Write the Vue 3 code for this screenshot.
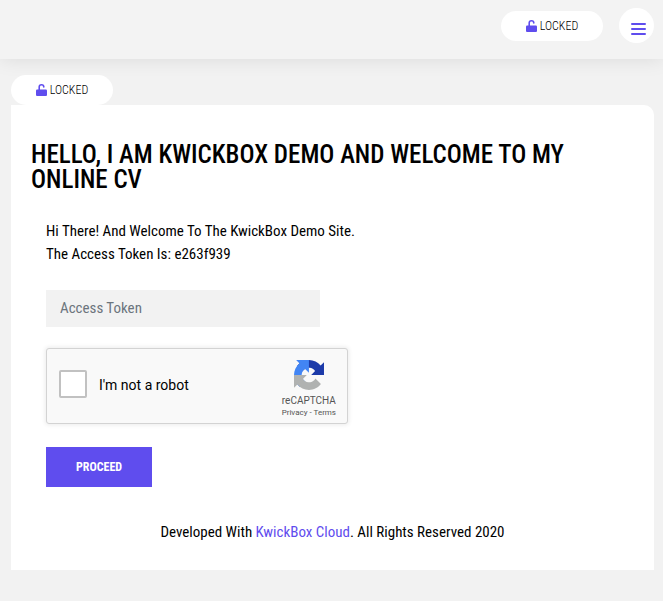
<template>
  <div class="page">
    <header class="header">
      <button type="button" class="lock-btn">
        <svg class="lock-icon" viewBox="0 0 11 12" aria-hidden="true">
          <path d="M3.2 6V3a2.3 2.2 0 0 1 4.6 0" fill="none" stroke="currentColor" stroke-width="1.6" stroke-linecap="round" />
          <rect x="0" y="5.6" width="11" height="6.4" rx="1.1" fill="currentColor" />
        </svg>
        LOCKED
      </button>
      <button type="button" class="menu-btn" aria-label="Menu" @click="menuOpen = !menuOpen">
        <svg class="menu-icon" viewBox="0 0 15 12" aria-hidden="true">
          <path d="M1 1h13M1 6h13M1 11h13" fill="none" stroke="currentColor" stroke-width="2" stroke-linecap="round" />
        </svg>
      </button>
    </header>

    <main class="main">
      <button type="button" class="lock-btn">
        <svg class="lock-icon" viewBox="0 0 11 12" aria-hidden="true">
          <path d="M3.2 6V3a2.3 2.2 0 0 1 4.6 0" fill="none" stroke="currentColor" stroke-width="1.6" stroke-linecap="round" />
          <rect x="0" y="5.6" width="11" height="6.4" rx="1.1" fill="currentColor" />
        </svg>
        LOCKED
      </button>

      <section class="card">
        <h1 class="title">HELLO, I AM KWICKBOX DEMO AND WELCOME TO MY ONLINE CV</h1>

        <form class="form" @submit.prevent>
          <p class="intro">
            Hi There! And Welcome To The KwickBox Demo Site.<br />
            The Access Token Is: e263f939
          </p>

          <input v-model="token" class="token" type="text" placeholder="Access Token" aria-label="Access Token" />

          <div class="captcha">
            <input id="robot" v-model="human" class="check" type="checkbox" />
            <label for="robot" class="check-label">I'm not a robot</label>
            <div class="brand">
              <svg class="brand-logo" viewBox="0 0 64 64" aria-hidden="true">
                <path d="M64 31.955l-.033-1.37V4.687l-7.16 7.16C50.948 4.674 42.033.093 32.05.093c-10.389 0-19.622 4.96-25.458 12.64l11.736 11.86a15.55 15.55 0 0 1 4.754-5.334c2.05-1.6 4.952-2.906 8.968-2.906.485 0 .86.057 1.135.163 4.976.393 9.288 3.14 11.828 7.124l-8.307 8.307L64 31.953" fill="#1c3aa9" />
                <path d="M31.862.094l-1.37.033H4.594l7.16 7.16C4.58 13.147 0 22.06 0 32.046c0 10.389 4.96 19.622 12.64 25.458L24.5 45.768a15.55 15.55 0 0 1-5.334-4.754c-1.6-2.05-2.906-4.952-2.906-8.968 0-.485.057-.86.163-1.135.393-4.976 3.14-9.288 7.124-11.828l8.307 8.307L31.86.095" fill="#4285f4" />
                <path d="M.001 32.045l.033 1.37v25.898l7.16-7.16c5.86 7.173 14.774 11.754 24.76 11.754 10.389 0 19.622-4.96 25.458-12.64l-11.736-11.86a15.55 15.55 0 0 1-4.754 5.334c-2.05 1.6-4.952 2.906-8.968 2.906-.485 0-.86-.057-1.135-.163-4.976-.393-9.288-3.14-11.828-7.124l8.307-8.307c-10.522.04-22.4.066-27.295-.005" fill="#b0b2b1" />
              </svg>
              <span class="brand-name">reCAPTCHA</span>
              <span class="brand-links"><a href="#">Privacy</a> - <a href="#">Terms</a></span>
            </div>
          </div>

          <button type="submit" class="proceed">PROCEED</button>
        </form>

        <footer class="footer">
          Developed With <a href="#">KwickBox Cloud</a>. All Rights Reserved 2020
        </footer>
      </section>
    </main>
  </div>
</template>

<script setup>
import { ref } from 'vue';

const token = ref('');
const human = ref(false);
const menuOpen = ref(false);
</script>

<style>
body {
  margin: 0;
  background: #f2f2f2;
}
</style>

<style scoped>
.page {
  min-height: 100vh;
  background: #f2f2f2;
  color: #000;
  font-family: 'Roboto Condensed', Roboto, sans-serif;
  font-size: 15px;
  line-height: 23px;
}

.page * {
  box-sizing: border-box;
}

button,
input {
  font-family: inherit;
}

.header {
  display: flex;
  justify-content: flex-end;
  align-items: center;
  gap: 16px;
  padding: 8px 9px 16px;
  background: #f3f3f3;
  box-shadow: 0 0 20px rgba(0, 0, 0, 0.1);
}

.lock-btn {
  display: inline-flex;
  align-items: center;
  justify-content: center;
  gap: 3px;
  width: 102px;
  height: 30px;
  padding: 0;
  border: none;
  border-radius: 15px;
  background: #fff;
  color: #000;
  font-size: 12px;
  font-weight: 300;
  cursor: pointer;
}

.lock-icon {
  width: 11px;
  height: 12px;
  color: #5f4dee;
}

.menu-btn {
  display: flex;
  justify-content: center;
  width: 35px;
  height: 35px;
  padding: 15px 0 0 4px;
  border: none;
  border-radius: 50%;
  background: #fff;
  color: #5f4dee;
  cursor: pointer;
}

.menu-icon {
  width: 15px;
  height: 12px;
}

.main {
  display: flex;
  flex-direction: column;
  align-items: flex-start;
  padding: 16px 9px 31px 11px;
}

.card {
  width: 100%;
  padding: 37px 20px 26px;
  border-radius: 0 10px 0 0;
  background: #fff;
}

.title {
  margin: 0;
  font-size: 25px;
  font-weight: 500;
  line-height: 25px;
}

.form {
  display: flex;
  flex-direction: column;
  align-items: flex-start;
  padding: 28px 15px 0;
}

.intro {
  margin: 0 0 24px;
}

.token {
  width: 274px;
  max-width: 100%;
  height: 37px;
  margin-bottom: 21px;
  padding: 0 14px 2px;
  border: none;
  background: #f2f2f2;
  color: #000;
  font-size: 15px;
}

.token::placeholder {
  color: #6c757d;
}

.captcha {
  display: flex;
  align-items: center;
  width: 302px;
  max-width: 100%;
  height: 76px;
  margin-bottom: 23px;
  padding: 0 11px 2px 12px;
  border: 1px solid #d3d3d3;
  border-radius: 3px;
  background: #f9f9f9;
  box-shadow: 0 0 4px 1px rgba(0, 0, 0, 0.08);
  font-family: Roboto, sans-serif;
}

.check {
  width: 28px;
  height: 28px;
  margin: 0 12px 2px 0;
  border: 2px solid #c1c1c1;
  border-radius: 2px;
  background: #fff;
  appearance: none;
  cursor: pointer;
}

.check:checked {
  background: #5f4dee;
}

.check-label {
  flex: 1;
  font-size: 14px;
}

.brand {
  display: flex;
  flex-direction: column;
  align-items: center;
  padding-top: 8px;
  color: #555;
}

.brand-logo {
  width: 30px;
  height: 30px;
  margin-bottom: 5px;
}

.brand-name {
  font-size: 10px;
  line-height: 12px;
}

.brand-links {
  font-size: 8px;
  line-height: 12px;
}

.brand-links a {
  color: inherit;
  text-decoration: none;
}

.proceed {
  height: 40px;
  padding: 0 30px;
  border: none;
  background: #5f4dee;
  color: #fff;
  font-size: 12px;
  font-weight: 700;
  cursor: pointer;
}

.footer {
  padding-top: 34px;
  text-align: center;
}

.footer a {
  color: #5f4dee;
  text-decoration: none;
}
</style>
